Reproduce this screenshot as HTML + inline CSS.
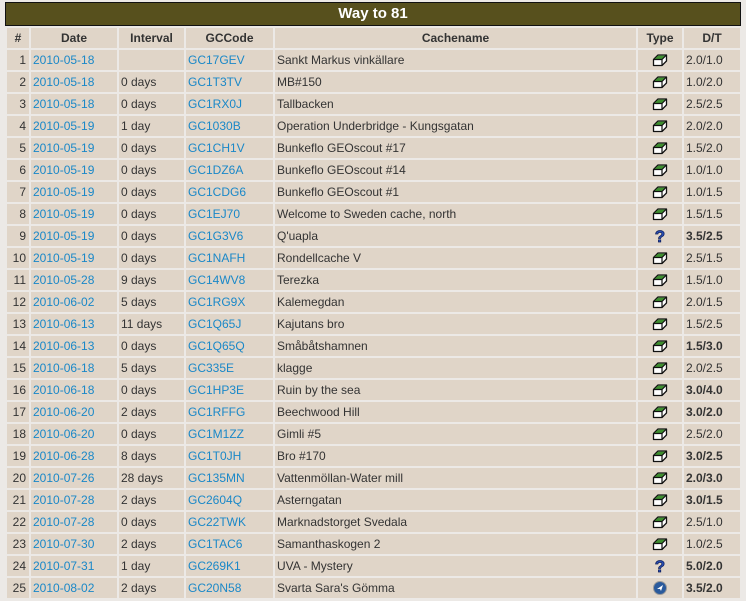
<!DOCTYPE html>
<html><head><meta charset="utf-8"><style>
body{margin:0;background:#ece9e6;width:746px;height:601px;overflow:hidden;font-family:"Liberation Sans",sans-serif;font-size:12px;color:#333}
.t{position:absolute;left:5px;top:2px;width:734px;height:22px;background:#57501d;border:1px solid #111;color:#fff;font-weight:bold;font-size:15px;text-align:center;line-height:22px}
table{position:absolute;left:5px;top:26px;border-spacing:2px;table-layout:fixed;width:737px}
td,th{background:#e0d5c8;height:20px;padding:0 2px;white-space:nowrap;overflow:hidden}
th{font-weight:bold;color:#333;font-size:12px}
td:first-child{text-align:right;padding-right:3px}
td:nth-child(6){text-align:center;padding:0}
a{color:#1a88c8;text-decoration:none}
b{color:#333}
svg{display:block;margin:0 auto}
</style></head><body>
<div class="t">Way to 81</div>
<svg width="0" height="0" style="position:absolute"><defs>
<g id="tr"><path d="M2.5 7.5 L7 3 L15.5 3 L15.5 9 L11 13.5 L2.5 13.5 Z" fill="#fff" stroke="#111" stroke-width="1.3" stroke-linejoin="round"/><path d="M3.2 7.2 L7.2 3.6 L14.8 3.6 L10.8 7.2 Z" fill="#3f8f30"/><path d="M2.5 7.5 L11 7.5 L11 13.5 M11 7.5 L15.5 3" fill="none" stroke="#111" stroke-width="1.2"/></g>
<g id="my"><text x="8" y="15" font-size="17" font-weight="bold" text-anchor="middle" fill="#2a4fb5" stroke="#0a1a55" stroke-width="0.7" font-family="Liberation Sans">?</text></g>
<g id="ci"><circle cx="8" cy="9" r="6.5" fill="#2a5a9c" stroke="#999"/><path d="M5 10 L11 6 L9 12 L8 10 Z" fill="#fff"/></g>
</defs></svg>
<table>
<colgroup><col style="width:22px"><col style="width:86px"><col style="width:65px"><col style="width:87px"><col style="width:361px"><col style="width:44px"><col style="width:56px"></colgroup>
<tr><th>#</th><th>Date</th><th>Interval</th><th>GCCode</th><th>Cachename</th><th>Type</th><th>D/T</th></tr>
<tr><td>1</td><td><a>2010-05-18</a></td><td></td><td><a>GC17GEV</a></td><td>Sankt Markus vinkällare</td><td><svg width="18" height="16"><use href="#tr"/></svg></td><td>2.0/1.0</td></tr>
<tr><td>2</td><td><a>2010-05-18</a></td><td>0 days</td><td><a>GC1T3TV</a></td><td>MB#150</td><td><svg width="18" height="16"><use href="#tr"/></svg></td><td>1.0/2.0</td></tr>
<tr><td>3</td><td><a>2010-05-18</a></td><td>0 days</td><td><a>GC1RX0J</a></td><td>Tallbacken</td><td><svg width="18" height="16"><use href="#tr"/></svg></td><td>2.5/2.5</td></tr>
<tr><td>4</td><td><a>2010-05-19</a></td><td>1 day</td><td><a>GC1030B</a></td><td>Operation Underbridge - Kungsgatan</td><td><svg width="18" height="16"><use href="#tr"/></svg></td><td>2.0/2.0</td></tr>
<tr><td>5</td><td><a>2010-05-19</a></td><td>0 days</td><td><a>GC1CH1V</a></td><td>Bunkeflo GEOscout #17</td><td><svg width="18" height="16"><use href="#tr"/></svg></td><td>1.5/2.0</td></tr>
<tr><td>6</td><td><a>2010-05-19</a></td><td>0 days</td><td><a>GC1DZ6A</a></td><td>Bunkeflo GEOscout #14</td><td><svg width="18" height="16"><use href="#tr"/></svg></td><td>1.0/1.0</td></tr>
<tr><td>7</td><td><a>2010-05-19</a></td><td>0 days</td><td><a>GC1CDG6</a></td><td>Bunkeflo GEOscout #1</td><td><svg width="18" height="16"><use href="#tr"/></svg></td><td>1.0/1.5</td></tr>
<tr><td>8</td><td><a>2010-05-19</a></td><td>0 days</td><td><a>GC1EJ70</a></td><td>Welcome to Sweden cache, north</td><td><svg width="18" height="16"><use href="#tr"/></svg></td><td>1.5/1.5</td></tr>
<tr><td>9</td><td><a>2010-05-19</a></td><td>0 days</td><td><a>GC1G3V6</a></td><td>Q'uapla</td><td><svg width="16" height="18"><use href="#my"/></svg></td><td><b>3.5/2.5</b></td></tr>
<tr><td>10</td><td><a>2010-05-19</a></td><td>0 days</td><td><a>GC1NAFH</a></td><td>Rondellcache V</td><td><svg width="18" height="16"><use href="#tr"/></svg></td><td>2.5/1.5</td></tr>
<tr><td>11</td><td><a>2010-05-28</a></td><td>9 days</td><td><a>GC14WV8</a></td><td>Terezka</td><td><svg width="18" height="16"><use href="#tr"/></svg></td><td>1.5/1.0</td></tr>
<tr><td>12</td><td><a>2010-06-02</a></td><td>5 days</td><td><a>GC1RG9X</a></td><td>Kalemegdan</td><td><svg width="18" height="16"><use href="#tr"/></svg></td><td>2.0/1.5</td></tr>
<tr><td>13</td><td><a>2010-06-13</a></td><td>11 days</td><td><a>GC1Q65J</a></td><td>Kajutans bro</td><td><svg width="18" height="16"><use href="#tr"/></svg></td><td>1.5/2.5</td></tr>
<tr><td>14</td><td><a>2010-06-13</a></td><td>0 days</td><td><a>GC1Q65Q</a></td><td>Småbåtshamnen</td><td><svg width="18" height="16"><use href="#tr"/></svg></td><td><b>1.5/3.0</b></td></tr>
<tr><td>15</td><td><a>2010-06-18</a></td><td>5 days</td><td><a>GC335E</a></td><td>klagge</td><td><svg width="18" height="16"><use href="#tr"/></svg></td><td>2.0/2.5</td></tr>
<tr><td>16</td><td><a>2010-06-18</a></td><td>0 days</td><td><a>GC1HP3E</a></td><td>Ruin by the sea</td><td><svg width="18" height="16"><use href="#tr"/></svg></td><td><b>3.0/4.0</b></td></tr>
<tr><td>17</td><td><a>2010-06-20</a></td><td>2 days</td><td><a>GC1RFFG</a></td><td>Beechwood Hill</td><td><svg width="18" height="16"><use href="#tr"/></svg></td><td><b>3.0/2.0</b></td></tr>
<tr><td>18</td><td><a>2010-06-20</a></td><td>0 days</td><td><a>GC1M1ZZ</a></td><td>Gimli #5</td><td><svg width="18" height="16"><use href="#tr"/></svg></td><td>2.5/2.0</td></tr>
<tr><td>19</td><td><a>2010-06-28</a></td><td>8 days</td><td><a>GC1T0JH</a></td><td>Bro #170</td><td><svg width="18" height="16"><use href="#tr"/></svg></td><td><b>3.0/2.5</b></td></tr>
<tr><td>20</td><td><a>2010-07-26</a></td><td>28 days</td><td><a>GC135MN</a></td><td>Vattenmöllan-Water mill</td><td><svg width="18" height="16"><use href="#tr"/></svg></td><td><b>2.0/3.0</b></td></tr>
<tr><td>21</td><td><a>2010-07-28</a></td><td>2 days</td><td><a>GC2604Q</a></td><td>Asterngatan</td><td><svg width="18" height="16"><use href="#tr"/></svg></td><td><b>3.0/1.5</b></td></tr>
<tr><td>22</td><td><a>2010-07-28</a></td><td>0 days</td><td><a>GC22TWK</a></td><td>Marknadstorget Svedala</td><td><svg width="18" height="16"><use href="#tr"/></svg></td><td>2.5/1.0</td></tr>
<tr><td>23</td><td><a>2010-07-30</a></td><td>2 days</td><td><a>GC1TAC6</a></td><td>Samanthaskogen 2</td><td><svg width="18" height="16"><use href="#tr"/></svg></td><td>1.0/2.5</td></tr>
<tr><td>24</td><td><a>2010-07-31</a></td><td>1 day</td><td><a>GC269K1</a></td><td>UVA - Mystery</td><td><svg width="16" height="18"><use href="#my"/></svg></td><td><b>5.0/2.0</b></td></tr>
<tr><td>25</td><td><a>2010-08-02</a></td><td>2 days</td><td><a>GC20N58</a></td><td>Svarta Sara's Gömma</td><td><svg width="16" height="18"><use href="#ci"/></svg></td><td><b>3.5/2.0</b></td></tr>
</table>
</body></html>
